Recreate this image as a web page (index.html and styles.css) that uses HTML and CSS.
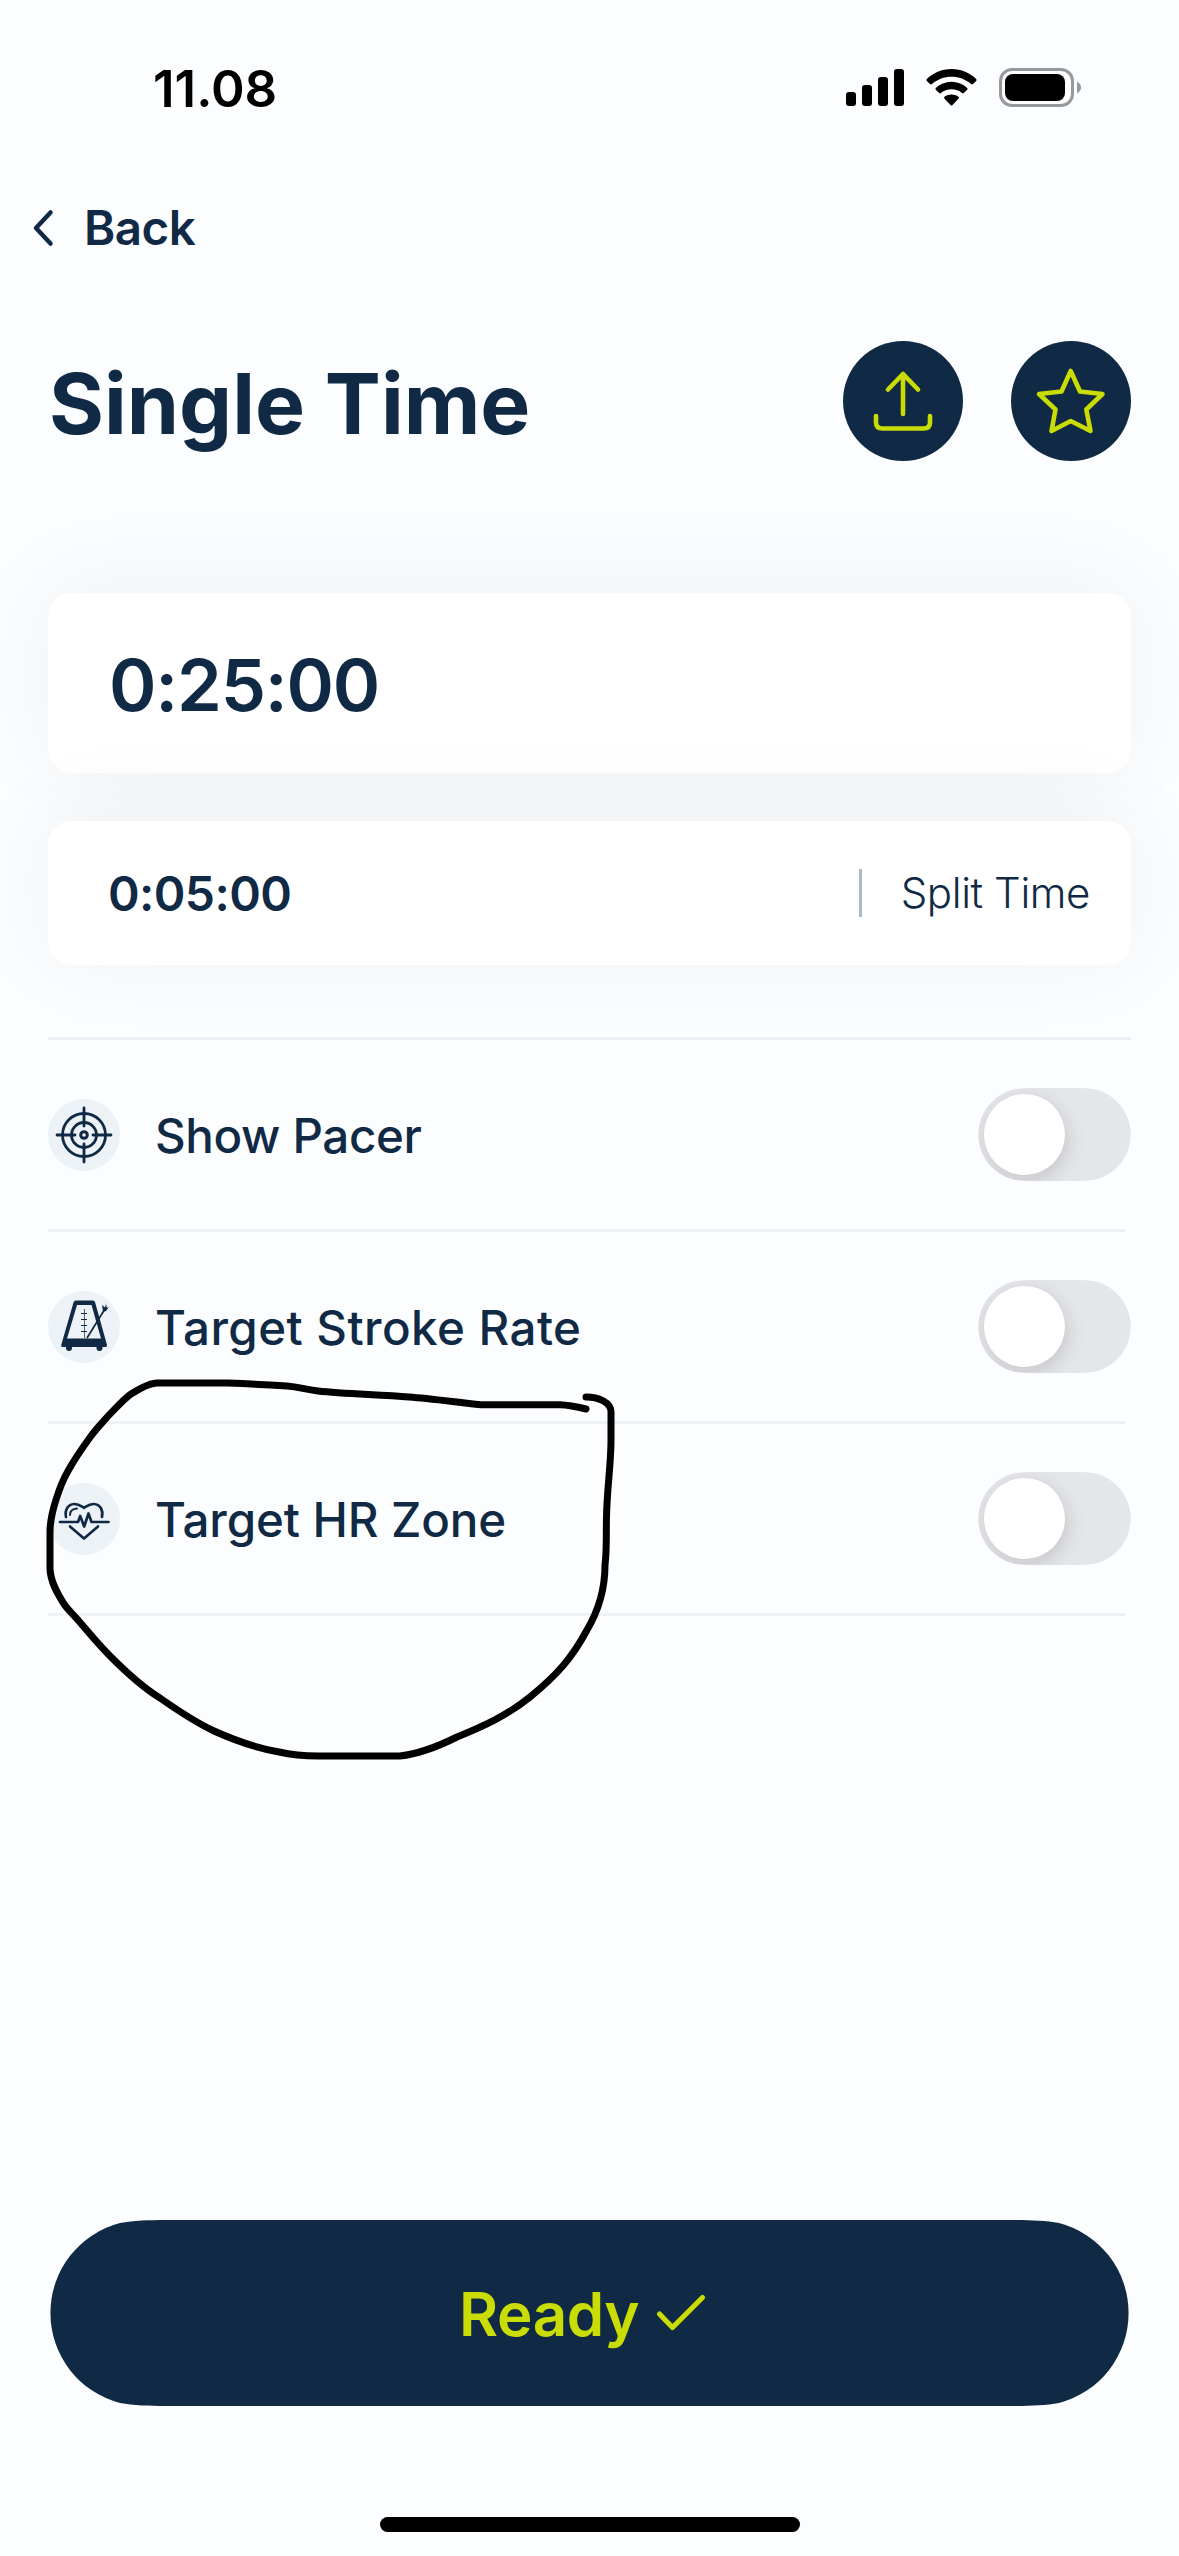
FILE: index.html
```html
<!DOCTYPE html>
<html lang="en">
<head>
<meta charset="utf-8">
<title>Single Time</title>
<link rel="stylesheet" href="styles.css">
</head>
<body>
<svg width="0" height="0" class="defs" aria-hidden="true">
  <symbol id="track" viewBox="0 0 153 93">
    <path d="M69 0H84C99 0 109 -.2 118 1.500A46.500 46.500 0 0 1 118 91.500C109 93.200 99 93 84 93H69C54 93 44 93.200 35 91.500A46.500 46.500 0 0 1 35 1.500C44 -.2 54 0 69 0Z"/>
  </symbol>
</svg>
<main class="screen">
  <header class="status">
    <span class="clock">11.08</span>
    <svg class="indicators" width="236" height="40" viewBox="0 0 236 40">
      <rect x="0" y="24" width="10" height="14" rx="3"/>
      <rect x="16" y="17" width="10" height="21" rx="3"/>
      <rect x="32" y="9" width="10" height="29" rx="3"/>
      <rect x="48" y="1" width="10" height="37" rx="3"/>
      <path d="M105.500 1C115.500 1 124 5 130.200 11Q131 12 130.200 12.900L127 16Q126 16.800 125 16C119.500 11.200 113 8.700 105.500 8.700S91.500 11.200 86 16Q85 16.800 84 16L80.800 12.900Q80 12 80.800 11C87 5 95.500 1 105.500 1Z"/>
      <path d="M105.500 13.700C111.700 13.700 117 16 121.200 19.900Q122 20.800 121.200 21.700L117.800 25Q117 25.800 116 25C113 22.600 109.500 21.300 105.500 21.300S98 22.600 95 25Q94 25.800 93.200 25L89.800 21.700Q89 20.800 89.800 19.900C94 16 99.300 13.700 105.500 13.700Z"/>
      <path d="M105.500 26.500C108.200 26.500 110.500 27.300 112.500 28.800Q113.400 29.700 112.500 30.700L106.500 37Q105.500 38 104.500 37L98.500 30.700Q97.600 29.700 98.500 28.800C100.500 27.300 102.800 26.500 105.500 26.500Z"/>
      <rect x="154.500" y="1.500" width="72" height="36" rx="11.500" fill="none" stroke="#97989a" stroke-width="3"/>
      <rect x="159" y="6" width="60" height="27" rx="8"/>
      <path d="M231 13.500C233.500 14.800 235 17 235 19.500S233.500 24.200 231 25.500Z" fill="#97989a"/>
    </svg>
  </header>

  <nav class="back">
    <svg width="22" height="38" viewBox="0 0 22 38"><path d="M18.500 3.500L4 19L18.500 34.500"/></svg>
    <span>Back</span>
  </nav>

  <section class="heading">
    <h1>Single Time</h1>
    <button class="round" aria-label="Share">
      <svg width="120" height="120" viewBox="0 0 120 120"><path d="M60 73V33M45 48.500L60 33L75 48.500M33 75V81.500Q33 87.500 39.500 87.500H80.500Q87 87.500 87 81.500V75"/></svg>
    </button>
    <button class="round" aria-label="Favourite">
      <svg width="120" height="120" viewBox="0 0 120 120"><path d="M59.700 30L69 50.500L91.500 53L75.300 68.500L79.500 90L59.700 80L40.500 90L44.500 68.500L28 53L50.500 50.500Z"/></svg>
    </button>
  </section>

  <section class="cards">
    <div class="card total"><span>0:25:00</span></div>
    <div class="card split"><span class="value">0:05:00</span><span class="label">Split Time</span></div>
  </section>

  <section class="settings">
    <div class="row">
      <svg class="icon" width="72" height="72" viewBox="0 0 72 72">
        <circle cx="36" cy="36" r="36" fill="#edf2f6"/>
        <g fill="none" stroke="#102a45" stroke-width="2.800" stroke-linecap="round">
          <circle cx="36" cy="36" r="21.500"/><circle cx="36" cy="36" r="12.500"/><circle cx="36" cy="36" r="3.300" stroke-width="3"/>
          <path d="M36 9V27M36 45V63M9 36H27M45 36H63"/>
        </g>
      </svg>
      <span class="name pacer">Show Pacer</span>
      <span class="switch"><svg class="track" width="153" height="93"><use href="#track"/></svg><i class="knob"></i></span>
    </div>
    <div class="row">
      <svg class="icon" width="72" height="72" viewBox="0 0 72 72">
        <circle cx="36" cy="36" r="36" fill="#edf2f6"/>
        <path fill="#102a45" fill-rule="evenodd" d="M28 9.500H45Q46.500 9.500 47 11L59 54Q59.300 56 57.500 56H14.500Q12.800 56 13.200 54L25.500 11.500Q26 9.500 28 9.500ZM29 14L19 47.500H53L43.500 14Z"/>
        <circle cx="21" cy="57" r="3" fill="#102a45"/><circle cx="51.500" cy="57" r="3" fill="#102a45"/>
        <g fill="none" stroke="#102a45"><path d="M36.500 18V47" stroke-width="1" opacity=".7"/><path d="M33 22.500H39M33 28.500H39M33 34.500H39M33 40.500H39" stroke-width="1.100"/><path d="M39 47L56 19.500" stroke-width="1.700"/></g>
        <path fill="#102a45" d="M54 14L57 16.500L58 13L59 17L61 16L58 20L55 21Z"/>
      </svg>
      <span class="name stroke">Target Stroke Rate</span>
      <span class="switch"><svg class="track" width="153" height="93"><use href="#track"/></svg><i class="knob"></i></span>
    </div>
    <div class="row">
      <svg class="icon" width="72" height="72" viewBox="0 0 72 72">
        <circle cx="36" cy="36" r="36" fill="#edf2f6"/>
        <g fill="none" stroke="#102a45" stroke-width="2.700" stroke-linecap="round" stroke-linejoin="round">
          <path d="M18 34C16.500 27 20 21.300 26 21C30.500 20.800 33 23 36 24.800C39 23 41.500 20.800 46 21C52 21.300 55.500 27 54 34"/>
          <path d="M22 32C22 28 24.500 25.800 29 25.500" stroke-width="2"/>
          <path d="M12 39H30L32.200 33L36.200 43.500L40.500 30.500L43.500 39H60.500"/>
          <path d="M22 43.500L36 55.500L50 43.500"/>
        </g>
      </svg>
      <span class="name zone">Target HR Zone</span>
      <span class="switch"><svg class="track" width="153" height="93"><use href="#track"/></svg><i class="knob"></i></span>
    </div>
  </section>

  <button class="ready">
    <svg class="pill" width="1079" height="186" viewBox="0 0 1079 186"><path d="M139 0H940C968 0 990 -.4 1009 3A93 93 0 0 1 1009 183C990 186.400 968 186 940 186H139C111 186 89 186.400 70 183A93 93 0 0 1 70 3C89 -.4 111 0 139 0Z"/></svg>
    <span>Ready</span>
    <svg class="check" width="52" height="40" viewBox="0 0 52 40"><path d="M4.500 21L17.500 34.500L47.500 4.500"/></svg>
  </button>

  <div class="home"></div>

  <svg class="scribble" width="580" height="390" viewBox="40 1375 580 390">
    <path d="M586 1409Q570 1405 560 1404.700H481C455 1402 430 1398.500 409 1397C380 1394.500 345 1394 318 1391C304 1389.500 300 1387 287 1386Q255 1384 228 1383H157C150 1383 139 1389 131 1394C126 1397 116 1408 109 1415C102 1423 97 1428 91 1436C83 1447 74 1460 68 1471C61 1483 50 1512 50 1532V1568C50 1582 59 1596 64 1604C68 1610 73 1614 78 1620C89 1633 99 1645 111 1657C126 1672 142 1687 160 1698C177 1710 195 1722 214 1731C234 1740 256 1748 279 1752C292 1755 305 1756 318 1756H400C418 1754 439 1746 457 1737C484 1726 508 1715 530 1697C557 1675 572 1658 587 1630C600 1608 605 1588 605 1565C607 1548 606 1535 606.500 1517C607 1488 611 1465 611 1440V1412C611 1402 598 1397 586 1397"/>
  </svg>
</main>
</body>
</html>
```
FILE: styles.css
```css
* { box-sizing: border-box; }

body {
  margin: 0;
  background: #fcfdff;
  color: #102a45;
  font-family: Inter, "Liberation Sans", sans-serif;
}

button {
  border: 0;
  padding: 0;
  background: none;
  font: inherit;
}

svg { display: block; flex: none; }

.defs { position: absolute; }

.screen {
  position: relative;
  display: flex;
  flex-direction: column;
  width: 1179px;
  height: 2556px;
  padding: 0 48px 24px;
  overflow: hidden;
}

.status {
  display: flex;
  align-items: center;
  justify-content: space-between;
  height: 176px;
  padding: 0 49px 0 105px;
  color: #000;
}

.clock { font-size: 51px; font-weight: 600; }

.back {
  display: flex;
  align-items: center;
  gap: 30px;
  height: 103px;
  margin-left: -16px;
  font-size: 47.500px;
  font-weight: 600;
  letter-spacing: -0.5px;
}

.back svg {
  fill: none;
  stroke: #102a45;
  stroke-width: 4.500;
  stroke-linecap: round;
  stroke-linejoin: round;
}

.heading {
  display: flex;
  align-items: center;
  gap: 48px;
  height: 120px;
  margin-top: 62px;
}

.heading h1 {
  flex: 1;
  margin: 0;
  padding: 5px 0 0 1px;
  font-size: 84px;
  line-height: 100px;
  font-weight: 700;
  white-space: nowrap;
}

.round {
  width: 120px;
  height: 120px;
  border-radius: 50%;
  background: #102a45;
}

.round svg {
  fill: none;
  stroke: #c9dc04;
  stroke-width: 4.600;
  stroke-linecap: round;
  stroke-linejoin: round;
}

.cards {
  display: flex;
  flex-direction: column;
  gap: 48px;
  margin-top: 132px;
}

.card {
  display: flex;
  align-items: center;
  border-radius: 24px;
  background: #fff;
  box-shadow: 0 -8px 96px rgba(0, 0, 0, 0.055);
}

.total {
  height: 180px;
  padding: 3px 0 0 61px;
  font-size: 72px;
  font-weight: 600;
  letter-spacing: -1.200px;
}

.split {
  justify-content: space-between;
  height: 144px;
  padding: 0 41px 0 60px;
}

.split .value { font-size: 48px; font-weight: 600; letter-spacing: -0.600px; }

.split .label {
  padding-left: 39px;
  border-left: 3px solid #a9bccb;
  font-size: 42px;
  line-height: 48px;
  font-weight: 300;
  letter-spacing: -0.400px;
}

.settings { margin-top: 72px; border-top: 3px solid #ebf0f5; }

.row {
  display: flex;
  align-items: center;
  height: 192px;
  background: linear-gradient(#edf2f6, #edf2f6) left bottom / 1077px 3px no-repeat;
  padding-bottom: 3px;
}

.name {
  flex: 1;
  padding: 1px 0 0 35px;
  font-size: 47.500px;
  font-weight: 500;
  white-space: nowrap;
}

.pacer { letter-spacing: -0.350px; }
.stroke { letter-spacing: 0.450px; }
.zone { letter-spacing: -0.100px; }

.switch {
  display: grid;
  align-items: center;
  width: 153px;
  height: 93px;
  clip-path: inset(0 round 46px);
}

.switch > * { grid-area: 1 / 1; }

.track { fill: #e5e6ea; }

.knob {
  width: 81px;
  height: 81px;
  margin-left: 6px;
  border-radius: 50%;
  background: #fff;
  box-shadow: 2px 6px 20px rgba(0, 0, 0, 0.14);
}

.ready {
  display: grid;
  grid-template-columns: 463px auto 1fr;
  align-items: center;
  width: 1079px;
  height: 186px;
  margin: auto 0 111px 2px;
  color: #c9dc04;
  font-size: 60px;
  font-weight: 600;
}

.ready > * { grid-row: 1; }

.ready span { grid-column: 2; margin-left: -54px; padding-top: 2px; letter-spacing: -0.400px; }

.pill { grid-column: 1 / -1; fill: #102a45; }

.check {
  grid-column: 3;
  margin-left: 16px;
  fill: none;
  stroke: #c9dc04;
  stroke-width: 5.200;
  stroke-linecap: round;
  stroke-linejoin: round;
}

.home {
  align-self: center;
  width: 420px;
  height: 15px;
  border-radius: 8px;
  background: #000;
}

.scribble {
  position: absolute;
  left: 40px;
  top: 1375px;
  fill: none;
  stroke: #000;
  stroke-width: 7;
  stroke-linecap: round;
  stroke-linejoin: round;
}
```
